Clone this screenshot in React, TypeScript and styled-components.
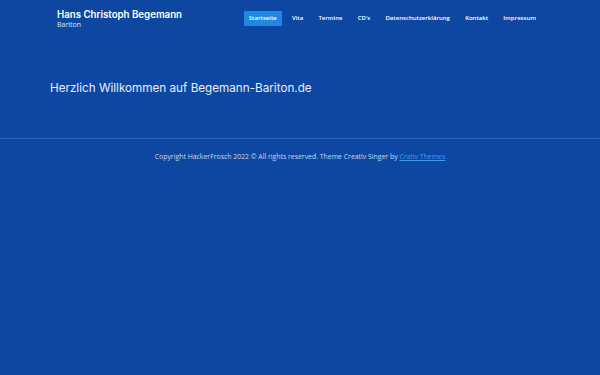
import React from "react";
import styled, { createGlobalStyle } from "styled-components";

const Global = createGlobalStyle`
  html, body { margin: 0; padding: 0; background: #0d47a1; }
  body { font-family: "Open Sans", sans-serif; }
`;

const Page = styled.div`
  width: 600px;
  height: 375px;
  background: #0d47a1;
  color: #fff;
  display: flex;
  flex-direction: column;
`;

const Header = styled.header`
  display: flex;
  align-items: flex-start;
  justify-content: space-between;
  padding: 9px 59px 0 57px;
  height: 40px;
  box-sizing: border-box;
`;

const Brand = styled.div`
  display: flex;
  flex-direction: column;
`;

const SiteTitle = styled.div`
  font-family: Inter, sans-serif;
  font-weight: 600;
  font-size: 9.7px;
  line-height: 12px;
  color: #fff;
`;

const Tagline = styled.div`
  font-family: "Open Sans", sans-serif;
  font-size: 7px;
  line-height: 10px;
  margin-top: -1px;
  color: #dfe8f7;
`;

const Nav = styled.nav`
  display: flex;
  align-items: center;
  margin-top: 2px;
`;

const NavItem = styled.a<{ $active?: boolean }>`
  font-family: "Open Sans", sans-serif;
  font-weight: 600;
  font-size: 6px;
  line-height: 15px;
  padding: 0 5px;
  margin-left: 5.2px;
  color: #fff;
  background: ${(p) => (p.$active ? "#1e88e5" : "transparent")};
  text-decoration: none;
  &:first-child { margin-left: 0; }
`;

const Main = styled.main`
  padding: 0 50px;
  height: 98px;
  display: flex;
  align-items: center;
`;

const Welcome = styled.h1`
  margin: 0;
  font-family: Inter, sans-serif;
  font-weight: 400;
  font-size: 11.7px;
  color: #e8eef9;
  margin-top: -3px;
`;

const Footer = styled.footer`
  border-top: 1px solid #2a63bd;
  padding-top: 13px;
  text-align: center;
  font-family: "Open Sans", sans-serif;
  font-size: 6.9px;
  color: #c9d8f0;
`;

const FooterLink = styled.a`
  color: #3d9cf0;
  text-decoration: underline;
`;

const items = ["Startseite", "Vita", "Termine", "CD's", "Datenschutzerklärung", "Kontakt", "Impressum"];

export default function App() {
  return (
    <Page>
      <Global />
      <Header>
        <Brand>
          <SiteTitle>Hans Christoph Begemann</SiteTitle>
          <Tagline>Bariton</Tagline>
        </Brand>
        <Nav>
          {items.map((it, i) => (
            <NavItem key={it} $active={i === 0}>{it}</NavItem>
          ))}
        </Nav>
      </Header>
      <Main>
        <Welcome>Herzlich Willkommen auf Begemann-Bariton.de</Welcome>
      </Main>
      <Footer>
        Copyright HackerFrosch 2022 © All rights reserved. Theme Creativ Singer by <FooterLink>Crativ Themes</FooterLink>
      </Footer>
    </Page>
  );
}
